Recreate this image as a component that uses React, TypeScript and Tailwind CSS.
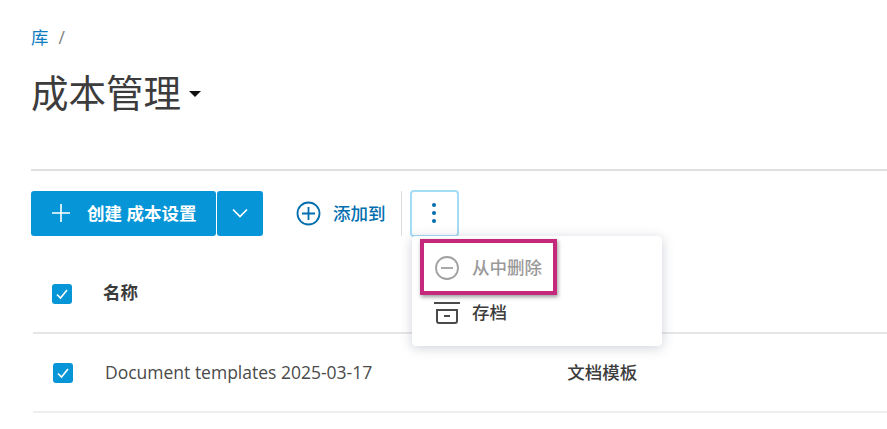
import React from "react";

const font = { fontFamily: '"Open Sans", "Noto Sans CJK SC", sans-serif' };

function Check() {
  return (
    <span className="flex h-5 w-5 items-center justify-center rounded-[3px] bg-[#0696d7]">
      <svg width="14" height="14" viewBox="0 0 14 14" fill="none" stroke="#fff" strokeWidth="1.6">
        <path d="M2 7.5 L5.5 11 L12 3" />
      </svg>
    </span>
  );
}

export default function App() {
  return (
    <div className="relative h-[429px] w-[887px] overflow-hidden bg-white text-[#3c3c3c]" style={font}>
      <div className="flex flex-col pl-[31px] pt-[26px]">
        <div className="flex h-[22px] items-center gap-[10px] text-[17.5px]">
          <span className="text-[#0f7cc0]">库</span>
          <span className="text-[#808080]">/</span>
        </div>
        <div className="mt-[22px] flex h-[46px] items-center gap-[8px]">
          <span className="text-[37.5px] leading-[46px] text-[#3c3c3c]">成本管理</span>
          <span className="mt-[2px] h-0 w-0 border-x-[6px] border-t-[6px] border-x-transparent border-t-[#111]" />
        </div>
        <div className="mt-[53px] h-[2px] bg-[#e0e0e0]" />
        <div className="mt-[19px] flex h-[46px] items-center">
          <div className="flex h-[45px] w-[185px] items-center rounded-[3px] bg-[#0696d7] pl-[20px] text-white">
            <svg width="20" height="20" viewBox="0 0 20 20" fill="none" stroke="#fff" strokeWidth="1.6">
              <path d="M10 1 V19 M1 10 H19" />
            </svg>
            <span className="ml-[16px] text-[17.5px] font-bold whitespace-nowrap">创建 成本设置</span>
          </div>
          <div className="ml-[1px] flex h-[45px] w-[46px] items-center justify-center rounded-[3px] bg-[#0696d7]">
            <svg width="16" height="10" viewBox="0 0 16 10" fill="none" stroke="#fff" strokeWidth="1.7">
              <path d="M1 1.5 L8 8.5 L15 1.5" />
            </svg>
          </div>
          <svg className="ml-[33px]" width="25" height="25" viewBox="0 0 25 25" fill="none" stroke="#006eaf" strokeWidth="1.8">
            <circle cx="12.5" cy="12.5" r="11" />
            <path d="M12.5 6 V19 M6 12.5 H19" />
          </svg>
          <span className="ml-[12px] text-[17.5px] font-medium text-[#006eaf]">添加到</span>
          <div className="ml-[15px] h-[45px] w-[1px] bg-[#dcdcdc]" />
          <div className="ml-[8px] flex h-[47px] w-[49px] flex-col items-center justify-center gap-[4px] rounded-[4px] border-2 border-[#a5dcf5]">
            <span className="h-[4px] w-[4px] rounded-full bg-[#006eaf]" />
            <span className="h-[4px] w-[4px] rounded-full bg-[#006eaf]" />
            <span className="h-[4px] w-[4px] rounded-full bg-[#006eaf]" />
          </div>
        </div>
        <div className="mt-[17px] ml-[2px] flex h-[81px] items-center border-b-2 border-[#e6e6e6] pl-[19px] pt-[3px]">
          <Check />
          <span className="ml-[31px] -mt-[3px] text-[17.5px] font-bold">名称</span>
        </div>
        <div className="ml-[2px] flex h-[79px] items-center border-b-2 border-[#eeeeee] pl-[20px] text-[17.5px]">
          <Check />
          <span className="ml-[32px] whitespace-nowrap text-[#4a4a4a]">Document templates 2025-03-17</span>
          <span className="ml-[195px] font-medium">文档模板</span>
        </div>
      </div>

      <div className="absolute left-[412px] top-[236px] h-[110px] w-[250px] rounded-[4px] bg-white pl-[22px] shadow-[0_2px_12px_rgba(60,70,100,0.25)]">
        <div className="mt-[13px] flex h-[37px] items-center text-[#9a9a9a]">
          <svg width="26" height="24" viewBox="0 0 26 24" fill="none" stroke="#a0a0a0" strokeWidth="1.8">
            <circle cx="13" cy="12" r="11" />
            <path d="M7 12 H19" />
          </svg>
          <span className="ml-[12px] text-[17.5px] font-medium">从中删除</span>
        </div>
        <div className="mt-[10px] flex h-[33px] items-center">
          <svg width="26" height="24" viewBox="0 0 26 24" fill="none" stroke="#4a4a4a" strokeWidth="2">
            <path d="M0 2 H26" />
            <path d="M3 9 H23 V20 A2 2 0 0 1 21 22 H5 A2 2 0 0 1 3 20 Z" />
            <path d="M10 15 H16" />
          </svg>
          <span className="ml-[12px] text-[17.5px] font-medium">存档</span>
        </div>
      </div>
      <div className="absolute left-[420px] top-[239px] h-[56px] w-[137px] border-[4px] border-[#c5297b] shadow-[1px_2px_4px_rgba(0,0,0,0.4)]" />
    </div>
  );
}
